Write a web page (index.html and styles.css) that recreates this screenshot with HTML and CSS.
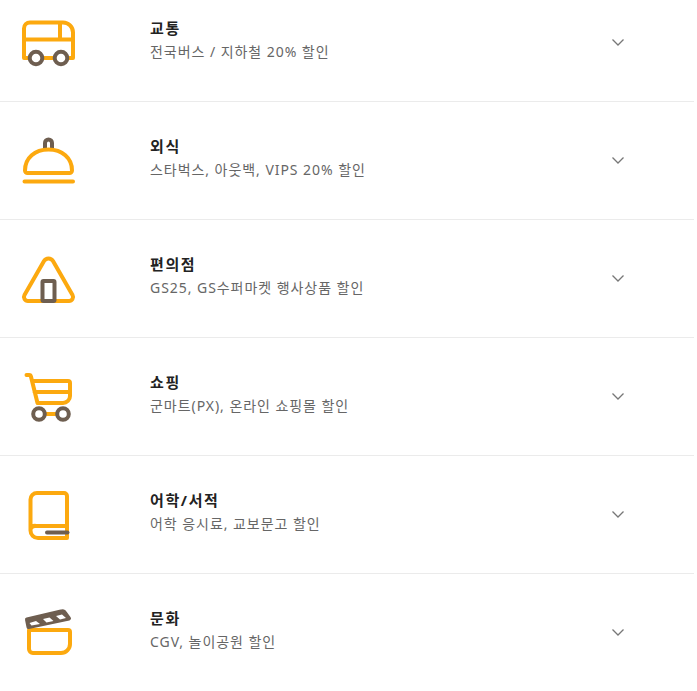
FILE: index.html
```html
<!DOCTYPE html>
<html lang="ko">
<head>
    <meta charset="UTF-8">
    <meta name="viewport" content="width=device-width, initial-scale=1.0">
    <title>혜택</title>
    <link rel="stylesheet" href="styles.css">
</head>
<body>
<ul class="benefit-list">
    <li class="benefit">
        <svg class="icon" viewBox="0 0 64 64">
            <path class="line" d="M8 47V17.500a6 6 0 0 1 6-6h33a10 10 0 0 1 10 10V47H8zM8 28.500H57M44 11.500V28.500"/>
            <circle class="wheel" cx="20" cy="47" r="6.300"/>
            <circle class="wheel" cx="45" cy="47" r="6.300"/>
        </svg>
        <div class="text">
            <h3>교통</h3>
            <p>전국버스 / 지하철 20% 할인</p>
        </div>
        <svg class="arrow" viewBox="0 0 14 10"><polyline points="1.500,1.500 7,7 12.500,1.500"/></svg>
    </li>
    <li class="benefit">
        <svg class="icon" viewBox="0 0 64 64">
            <path class="brown" d="M29 19v-5a3.500 3.500 0 0 1 7 0v5"/>
            <path class="line" d="M9 41.500C9 29 19 20.500 32.500 20.500S56 29 56 41.500a2.500 2.500 0 0 1-2.500 2.500h-42A2.500 2.500 0 0 1 9 41.500zM8.500 52.500H57"/>
        </svg>
        <div class="text">
            <h3>외식</h3>
            <p>스타벅스, 아웃백, VIPS 20% 할인</p>
        </div>
        <svg class="arrow" viewBox="0 0 14 10"><polyline points="1.500,1.500 7,7 12.500,1.500"/></svg>
    </li>
    <li class="benefit">
        <svg class="icon" viewBox="0 0 64 64">
            <path class="line" d="M28 14a5.200 5.200 0 0 1 9 0L56.500 48a4 4 0 0 1-3.500 6H12a4 4 0 0 1-3.500-6z"/>
            <rect class="brown" x="26.500" y="34" width="12" height="20" rx="1"/>
        </svg>
        <div class="text">
            <h3>편의점</h3>
            <p>GS25, GS수퍼마켓 행사상품 할인</p>
        </div>
        <svg class="arrow" viewBox="0 0 14 10"><polyline points="1.500,1.500 7,7 12.500,1.500"/></svg>
    </li>
    <li class="benefit">
        <svg class="icon" viewBox="0 0 64 64">
            <path class="line" d="M10.500 10H13a2 2 0 0 1 2 1.700L21.500 38H47a7 7 0 0 0 7-7V18a2 2 0 0 0-2-2H16.500M18.500 27H54M23 49H47"/>
            <circle class="wheel" cx="23" cy="49" r="5.800"/>
            <circle class="wheel" cx="47" cy="49" r="5.800"/>
        </svg>
        <div class="text">
            <h3>쇼핑</h3>
            <p>군마트(PX), 온라인 쇼핑몰 할인</p>
        </div>
        <svg class="arrow" viewBox="0 0 14 10"><polyline points="1.500,1.500 7,7 12.500,1.500"/></svg>
    </li>
    <li class="benefit">
        <svg class="icon" viewBox="0 0 64 64">
            <path class="line" d="M21 10h27a3 3 0 0 1 3 3v42H22a7.500 7.500 0 0 1-7.500-7.500V16.500A6.500 6.500 0 0 1 21 10zM14.500 47.500A4.500 4.500 0 0 1 20 43H51"/>
            <path class="brown" d="M31 49.500H51.500"/>
        </svg>
        <div class="text">
            <h3>어학/서적</h3>
            <p>어학 응시료, 교보문고 할인</p>
        </div>
        <svg class="arrow" viewBox="0 0 14 10"><polyline points="1.500,1.500 7,7 12.500,1.500"/></svg>
    </li>
    <li class="benefit">
        <svg class="icon" viewBox="0 0 64 64">
            <path class="line" d="M13 29H52a2 2 0 0 1 2 2V43a9 9 0 0 1-9 9H17a4 4 0 0 1-4-4z"/>
            <path class="board" d="M11 18.500L45 10.500a3 3 0 0 1 4 1.500L53 17.500L12.500 26z"/>
            <path class="stripe" d="M13.500 22L20 20L24 23L15.500 24.500zM27 18L33.500 16.500L37.500 20L30.500 21.500zM40 15L46 13.500L50 17L44 18.500z"/>
        </svg>
        <div class="text">
            <h3>문화</h3>
            <p>CGV, 놀이공원 할인</p>
        </div>
        <svg class="arrow" viewBox="0 0 14 10"><polyline points="1.500,1.500 7,7 12.500,1.500"/></svg>
    </li>
</ul>
</body>
</html>
```

FILE: styles.css
```css
body {
    margin: 0;
    background-color: #fff;
    font-family: "Noto Sans", "Noto Sans CJK KR", sans-serif;
    overflow: hidden;
}

.benefit-list {
    list-style: none;
    margin: -16px 3px 0 0;
    padding: 0;
}

.benefit {
    display: flex;
    align-items: center;
    height: 117px;
    padding-left: 16px;
    border-bottom: 1px solid #ebebeb;
}

.benefit:last-child {
    border-bottom: none;
}

.icon {
    width: 64px;
    height: 64px;
    flex: none;
}

.line {
    fill: none;
    stroke: #fca90f;
    stroke-width: 4;
    stroke-linecap: round;
    stroke-linejoin: round;
}

.brown {
    fill: none;
    stroke: #6e5e50;
    stroke-width: 4;
    stroke-linecap: round;
}

.wheel {
    fill: #fff;
    stroke: #6e5e50;
    stroke-width: 4;
}

.board {
    fill: #6e5e50;
    stroke: #6e5e50;
    stroke-width: 4;
    stroke-linejoin: round;
}

.stripe {
    fill: #fff;
}

.text {
    flex: 1;
    margin-left: 70px;
    margin-top: -5px;
}

h3 {
    margin: 0;
    font-size: 15px;
    line-height: 20px;
    font-weight: 700;
    letter-spacing: 1.600px;
    color: #222;
}

p {
    margin: 4px 0 0;
    font-size: 14px;
    line-height: 20px;
    letter-spacing: 0.950px;
    color: #666;
}

.arrow {
    width: 14px;
    height: 10px;
    flex: none;
    margin-right: 69px;
    fill: none;
    stroke: #777;
    stroke-width: 1.300;
}
```
